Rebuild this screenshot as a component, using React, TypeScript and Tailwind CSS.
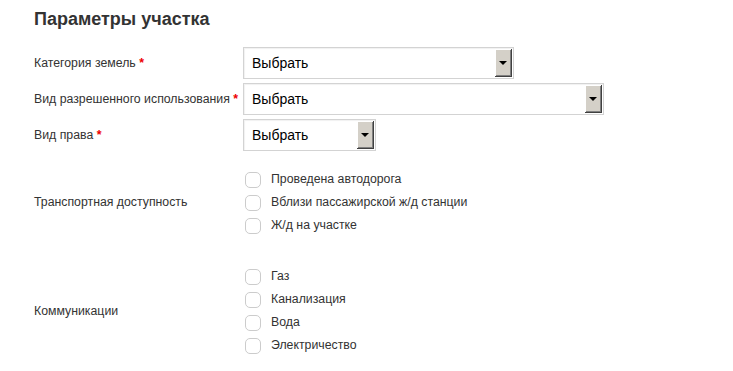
import React from 'react';

const FakeSelect = ({ width }: { width: string }) => (
	<div
		className={`${width} h-[32px] flex items-stretch border border-[#d3d3d3] bg-white shadow-[inset_1px_1px_1px_rgba(0,0,0,0.06)]`}
	>
		<div className="flex-1 flex items-center pl-[8px] text-[14px] text-black">
			Выбрать
		</div>
		<div className="w-[17px] my-[1px] mr-[1px] flex items-center justify-center bg-[#d4d0c8] border-r border-b border-[#404040] shadow-[inset_1px_1px_0_#ffffff,inset_-1px_-1px_0_#808080]">
			<div className="w-0 h-0 border-l-[4px] border-r-[4px] border-t-[4px] border-l-transparent border-r-transparent border-t-black" />
		</div>
	</div>
);

const Label = ({ text, required }: { text: string; required?: boolean }) => (
	<div className="w-[209px] text-[12.3px] text-[#333]">
		{text}
		{required && <span className="text-[#e00] font-bold"> *</span>}
	</div>
);

const CheckGroup = ({ label, items }: { label: string; items: string[] }) => (
	<div className="flex items-center">
		<Label text={label} />
		<div className="flex flex-col">
			{items.map((item) => (
				<div key={item} className="h-[23px] flex items-center">
					<div className="ml-[2px] w-[16px] h-[16px] rounded-[5px] border border-[#cccccc] bg-white" />
					<span className="ml-[10px] text-[12.3px] text-[#333]">{item}</span>
				</div>
			))}
		</div>
	</div>
);

export default function App() {
	return (
		<div className="w-[733px] h-[371px] bg-white pl-[34px] pt-[7px] font-['Liberation_Sans',Arial,sans-serif]">
			<h2 className="text-[18px] font-bold text-[#333] leading-[24px]">
				Параметры участка
			</h2>
			<div className="mt-[16px] flex flex-col gap-[4px]">
				<div className="flex items-center">
					<Label text="Категория земель" required />
					<FakeSelect width="w-[271px]" />
				</div>
				<div className="flex items-center">
					<Label text="Вид разрешенного использования" required />
					<FakeSelect width="w-[361px]" />
				</div>
				<div className="flex items-center">
					<Label text="Вид права" required />
					<FakeSelect width="w-[133px]" />
				</div>
			</div>
			<div className="mt-[17px] flex flex-col gap-[28px]">
				<CheckGroup
					label="Транспортная доступность"
					items={[
						'Проведена автодорога',
						'Вблизи пассажирской ж/д станции',
						'Ж/д на участке',
					]}
				/>
				<CheckGroup
					label="Коммуникации"
					items={['Газ', 'Канализация', 'Вода', 'Электричество']}
				/>
			</div>
		</div>
	);
}
